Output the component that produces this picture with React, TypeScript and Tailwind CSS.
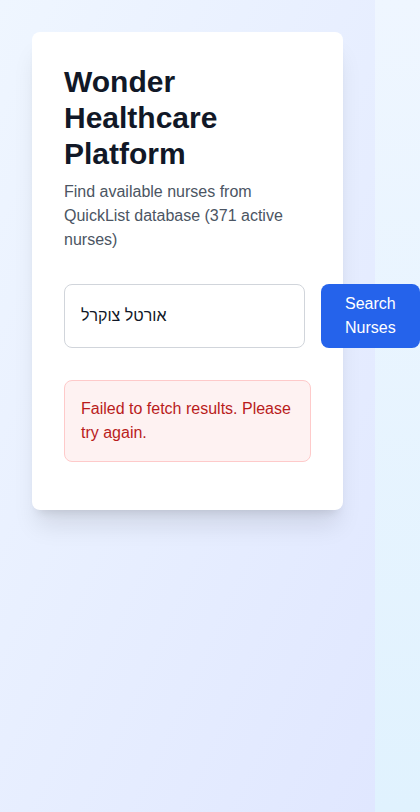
import React from "react";

export default function App() {
  return (
    <div
      className="min-h-[812px] w-full bg-gradient-to-b from-[#eff6ff] to-[#e0f2fe]"
      style={{ fontFamily: '"Liberation Sans", Arial, sans-serif' }}
    >
      <div className="w-[375px] min-h-[812px] bg-gradient-to-br from-[#eff6ff] to-[#e0e7ff] p-8">
        <div className="bg-white rounded-lg shadow-xl p-8 pb-12">
          <h1 className="text-3xl font-bold text-[#111827] leading-9">
            Wonder Healthcare Platform
          </h1>
          <p className="mt-2 text-base leading-6 text-[#4b5563]">
            Find available nurses from QuickList database (371 active nurses)
          </p>
          <div className="mt-8 flex gap-4">
            <input
              type="text"
              defaultValue="אורטל צוקרל"
              className="w-[241px] shrink-0 border border-[#d1d5db] rounded-lg px-4 text-base text-[#111827] bg-white outline-none"
              style={{ fontFamily: '"Liberation Sans", Arial, sans-serif' }}
            />
            <button className="shrink-0 bg-[#2563eb] text-white rounded-lg px-6 py-2 text-base leading-6 text-center">
              Search
              <br />
              Nurses
            </button>
          </div>
          <div className="mt-8 bg-[#fef2f2] border border-[#fecaca] rounded-lg p-4 text-[#b91c1c] text-base leading-6">
            Failed to fetch results. Please try again.
          </div>
        </div>
      </div>
    </div>
  );
}
